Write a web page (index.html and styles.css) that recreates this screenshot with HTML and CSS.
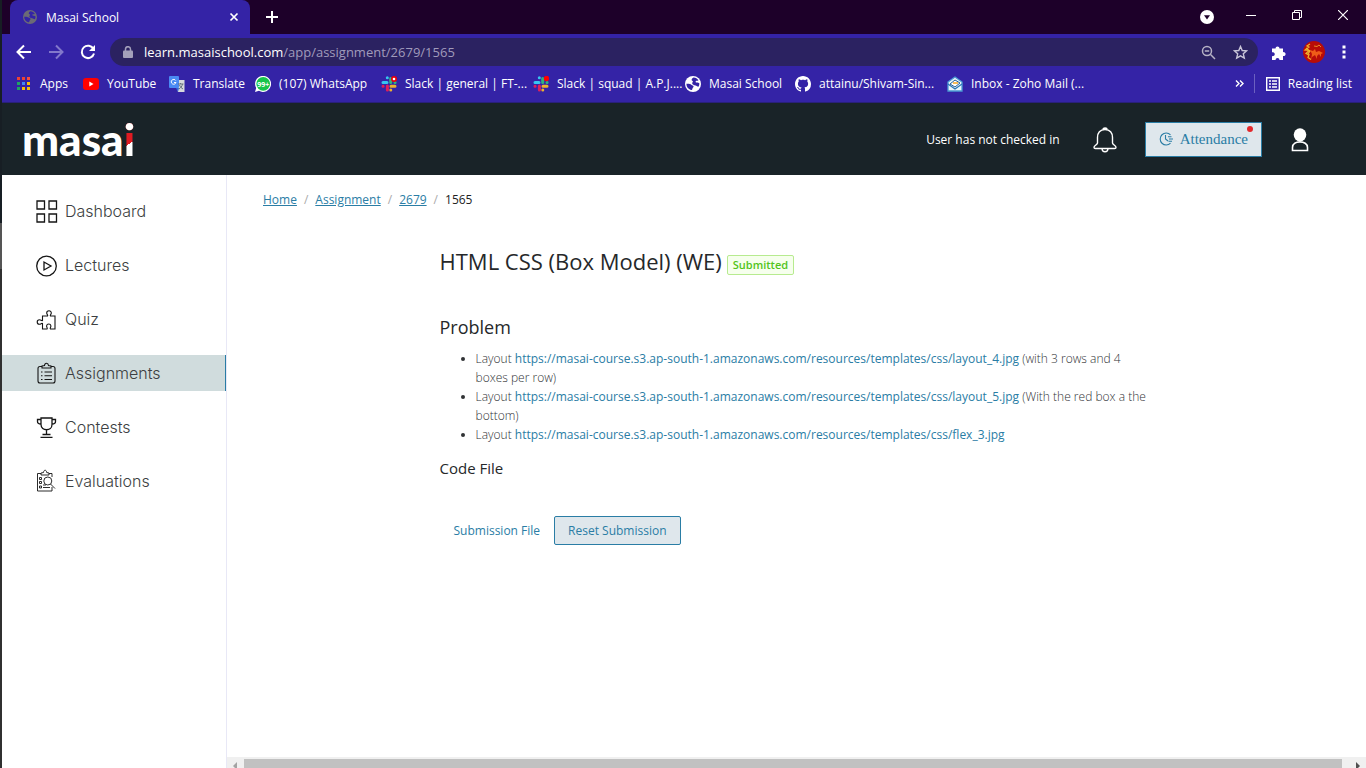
FILE: index.html
```html
<!DOCTYPE html>
<html lang="en">
<head>
<meta charset="utf-8">
<meta name="viewport" content="width=device-width, initial-scale=1">
<title>Masai School</title>
<link rel="stylesheet" href="styles.css">
</head>
<body>
<svg class="defs" aria-hidden="true">
  <symbol id="globe" viewBox="0 0 14 14"><circle cx="7" cy="7" r="7" fill="currentColor"/><path class="cut" d="M1.200 6.800c1.800-.2 3.500 0 4.300.8.700.7 1.900.3 2 1.400.1 1-.9 1.200-1 2.100-.1.700-.6 1.400-1.300 1.200C2.800 11.500 1.200 9.500 1.200 6.800zM7.500 1.300c1.800.1 3.400 1 4.300 2.500-.8.800-1.700.2-2.400.8-.5.600.2 1.100 1 1.100.9 0 1.700.2 2.200.9 0 1-.3 1.900-.8 2.700-1-.1-1.600-.7-2.600-1C8 7.900 6.500 7.800 6.300 6.600c-.1-.9.800-1.100.6-1.900-.1-.6-1-.5-1.100-1.200-.1-.9.800-1.900 1.700-2.200z"/></symbol>
  <symbol id="slack" viewBox="0 0 16 16"><g stroke-width="3" stroke-linecap="round" fill="none"><path d="M2 6.500h4M6.300 1.700v.1" stroke="#36c5f0"/><path d="M9.700 2.500v4M14 6.500h.1" stroke="#2eb67d"/><path d="M10 10.200h4M9.800 14v.1" stroke="#ecb22e"/><path d="M6.400 10v4M2 10.200h.1" stroke="#e01e5a"/></g></symbol>
</svg>
<div class="edge"></div>
<div class="window">
  <div class="tabs">
    <div class="tab"><svg class="i14 dim"><use href="#globe"/></svg><span>Masai School</span>
      <button class="ib" aria-label="Close tab"><svg width="10" height="10" viewBox="0 0 10 10"><path d="M1.500 1.500l7 7M8.500 1.500l-7 7" stroke="#fff" stroke-width="1.700"/></svg></button></div>
    <button class="ib new" aria-label="New tab"><svg width="12" height="12" viewBox="0 0 12 12"><path d="M6 0v12M0 6h12" stroke="#fff" stroke-width="2"/></svg></button>
    <div class="controls">
      <button class="ib search" aria-label="Search tabs"><svg width="14" height="14" viewBox="0 0 14 14"><circle cx="7" cy="7" r="7" fill="#fff"/><path d="M4 5.300h6L7 9.500z" fill="#1d0029"/></svg></button>
      <button class="ib" aria-label="Minimize"><svg width="10" height="10" viewBox="0 0 10 10"><path d="M0 5.500h10" stroke="#fff"/></svg></button>
      <button class="ib" aria-label="Restore"><svg width="10" height="10" viewBox="0 0 10 10"><path d="M.5 2.500h7v7h-7zM2.500 2.500v-2h7v7h-2" fill="none" stroke="#fff"/></svg></button>
      <button class="ib" aria-label="Close"><svg width="10" height="10" viewBox="0 0 10 10"><path d="M0 0l10 10M10 0L0 10" stroke="#fff" stroke-width="1.200"/></svg></button>
    </div>
  </div>
  <div class="toolbar">
    <div class="nav-buttons">
      <button class="ib" aria-label="Back"><svg width="16" height="16" viewBox="0 0 16 16"><path d="M15 8H2M8 1.500L1.500 8 8 14.500" fill="none" stroke="#fff" stroke-width="2"/></svg></button>
      <button class="ib" aria-label="Forward"><svg width="16" height="16" viewBox="0 0 16 16"><path d="M1 8h13M8 1.500L14.500 8 8 14.500" fill="none" stroke="#8278cb" stroke-width="2"/></svg></button>
      <button class="ib" aria-label="Reload"><svg width="16" height="16" viewBox="0 0 16 16"><path d="M13.500 5A6.200 6.200 0 1 0 14 9.500" fill="none" stroke="#fff" stroke-width="2"/><path d="M15 1v6H9z" fill="#fff"/></svg></button>
    </div>
    <div class="omnibox">
      <svg width="10" height="13" viewBox="0 0 10 13"><path d="M2.500 5V3.200a2.500 2.500 0 0 1 5 0V5" fill="none" stroke="#a4a0bb" stroke-width="1.500"/><rect y="4.500" width="10" height="7.500" rx="1" fill="#a4a0bb"/></svg>
      <span class="url"><b>learn.masaischool.com</b>/app/assignment/2679/1565</span>
      <button class="ib" aria-label="Zoom"><svg width="15" height="15" viewBox="0 0 15 15"><g fill="none" stroke="#b6b2c5" stroke-width="1.500"><circle cx="6" cy="6" r="4.500"/><path d="M9.300 9.300L14 14M3.800 6h4.400"/></g></svg></button>
      <button class="ib" aria-label="Bookmark"><svg width="15" height="15" viewBox="0 0 15 15"><path d="M7.500 1.500l1.700 4 4.400.4-3.300 2.900 1 4.300-3.800-2.300-3.800 2.300 1-4.300-3.300-2.900 4.400-.4z" fill="none" stroke="#c9c5d8" stroke-width="1.400"/></svg></button>
    </div>
    <div class="tools">
      <button class="ib" aria-label="Extensions"><svg width="15" height="15" viewBox="0 0 15 15"><path d="M1 3.500h3.500a2 2 0 1 1 4 0H12v3.700a2 2 0 1 1 0 3.800v4H8.500a2 2 0 1 0-4 0H1v-4a2 2 0 1 0 0-3.700z" fill="#fff"/></svg></button>
      <button class="ib" aria-label="Profile"><svg width="22" height="22" viewBox="0 0 22 22"><circle cx="11" cy="11" r="11" fill="#b80c08"/><path d="M7 3L4 5l2 1-4 3 4 .5-3 3 3 1-1 3 3 2M3 7l4 3-3 4" fill="none" stroke="#f1b52b" stroke-width="1.200"/><path d="M7 9l3 1 2-2 1 3 3-1 4 2-2 1v3l-2-3-2 2v3l-2-4-3 2-1 3 1-6z" fill="#ef5b18"/><path d="M11 5l3 .5L16 4l2 2" fill="none" stroke="#e88a22"/></svg></button>
      <button class="ib" aria-label="Menu"><svg width="4" height="14" viewBox="0 0 4 14"><path d="M.5.500h3v3h-3zM.5 5.500h3v3h-3zM.5 10.500h3v3h-3z" fill="#fff"/></svg></button>
    </div>
  </div>
  <nav class="bookmarks" aria-label="Bookmarks">
    <a href="#" class="w-s"><svg class="i16" viewBox="0 0 16 16"><path d="M1 1h3v3H1zM6 1h3v3H6z" fill="#ea4335"/><path d="M11 1h3v3h-3z" fill="#f44e3d"/><path d="M1 6h3v3H1z" fill="#1ea362"/><path d="M6 6h3v3H6z" fill="#4285f4"/><path d="M11 6h3v3h-3zM6 11h3v3H6zM11 11h3v3h-3z" fill="#fbbc05"/><path d="M1 11h3v3H1z" fill="#1ea362"/></svg>Apps</a>
    <a href="#" class="w-m"><svg class="i16" viewBox="0 0 16 16"><rect y="2" width="16" height="12" rx="3" fill="red"/><path d="M6.300 5.500v5l4.200-2.500z" fill="#fff"/></svg>YouTube</a>
    <a href="#" class="w-m"><svg class="i16" viewBox="0 0 16 16"><path d="M6 4h9.500v12H9z" fill="#d6d8dc"/><rect width="10" height="12" rx="1" fill="#4a8af4"/><path d="M6.700 4.500A2.400 2.400 0 1 0 7 6.500H5" fill="none" stroke="#fff"/><path d="M9 8h5.500M11.500 7v1M13.500 8c-.4 2.500-2 4-3.500 5M10.500 9c.8 2 2 3 3.500 4" fill="none" stroke="#66727d"/><path d="M7 12h3l-1 4z" fill="#3367d6"/></svg>Translate</a>
    <a href="#" class="w-l"><svg class="i16" viewBox="0 0 16 16"><path d="M0 16l1.200-4A8 8 0 1 1 4 14.800z" fill="#fff"/><circle cx="8.200" cy="7.800" r="6.900" fill="#16c44b"/><text x="8.200" y="10.600" text-anchor="middle" class="badge-text">99+</text></svg>(107) WhatsApp</a>
    <a href="#" class="w-xl"><svg class="i16" viewBox="0 0 16 16"><use href="#slack"/><circle cx="13" cy="3" r="3" fill="#e8000b"/><circle cx="13" cy="3" r="1.300" fill="#fff"/></svg>Slack | general | FT-...</a>
    <a href="#" class="w-xl"><svg class="i16" viewBox="0 0 16 16"><use href="#slack"/><circle cx="13.500" cy="2.500" r="2.700" fill="#f00"/></svg>Slack | squad | A.P.J....</a>
    <a href="#" class="w-n"><svg class="i16 globe"><use href="#globe"/></svg>Masai School</a>
    <a href="#" class="w-xl"><svg class="i16" viewBox="0 0 16 16"><path fill="#fff" d="M8 0C3.580 0 0 3.580 0 8c0 3.540 2.290 6.530 5.470 7.590.4.070.55-.17.55-.38 0-.19-.01-.82-.01-1.490-2.010.37-2.530-.49-2.690-.94-.09-.23-.48-.94-.82-1.130-.28-.15-.68-.52-.01-.53.63-.01 1.080.58 1.230.82.72 1.210 1.870.87 2.330.66.07-.52.28-.87.51-1.070-1.780-.2-3.640-.89-3.640-3.950 0-.87.31-1.590.82-2.150-.08-.2-.36-1.020.08-2.120 0 0 .67-.21 2.200.82.640-.18 1.320-.27 2-.27s1.360.09 2 .27c1.530-1.040 2.200-.82 2.200-.82.44 1.100.16 1.920.08 2.120.51.560.82 1.270.82 2.150 0 3.070-1.870 3.750-3.650 3.950.29.250.54.730.54 1.480 0 1.070-.01 1.930-.01 2.200 0 .21.150.46.550.38A8.010 8.010 0 0 0 16 8c0-4.420-3.580-8-8-8z"/></svg>attainu/Shivam-Sin...</a>
    <a href="#"><svg class="i16" viewBox="0 0 16 16"><path d="M1 6l7-5 7 5v9H1z" fill="#e8f4fb" stroke="#4a9ad4" stroke-width="1.300"/><path d="M3 8l5-4 5 3-5 4z" fill="#fff" stroke="#275f98"/><path d="M6 7h5" stroke="#f5a623" stroke-width="1.500"/><path d="M1 8l7 5 7-5" fill="none" stroke="#2a77b8" stroke-width="1.200"/></svg>Inbox - Zoho Mail (...</a>
    <div class="reading"><button class="ib" aria-label="More bookmarks"><svg width="9" height="7" viewBox="0 0 9 7"><path d="M1 .5l3 3-3 3M5 .5l3 3-3 3" fill="none" stroke="#fff" stroke-width="1.400"/></svg></button>
      <a href="#"><svg class="i14" viewBox="0 0 14 14"><path d="M.7.700h12.600v12.600H.7z" fill="none" stroke="#fff" stroke-width="1.400"/><path d="M3 4h2M6 4h5M3 7h2M6 7h5M3 10h2M6 10h5" stroke="#fff" stroke-width="1.500"/></svg>Reading list</a></div>
  </nav>
  <header class="site">
    <a href="#" class="logo" aria-label="masai">masa<span>i</span></a>
    <div class="user">
      <span class="status">User has not checked in</span>
      <button class="ib" aria-label="Notifications"><svg width="24" height="26" viewBox="0 0 24 26"><g fill="none" stroke="#fff" stroke-width="1.400"><path d="M12 2.500c-5 0-7.500 3.500-7.500 8v5.500c0 1.500-3.500 2.500-3.500 4.300 0 .8.500 1.200 1.300 1.200h19.400c.8 0 1.300-.4 1.300-1.200 0-1.800-3.500-2.800-3.500-4.300v-5.500c0-4.500-2.500-8-7.500-8zM10 2.700c0-2.300 4-2.300 4 0M9 21.700c.2 4 5.800 4 6 0"/></g></svg></button>
      <button class="attendance"><svg width="14" height="14" viewBox="0 0 14 14"><path d="M11.500 2.800A6 6 0 1 0 11.500 11.200M6.500 3v4l2.500 2M9 4.700h3.500M10 7h4M9.500 9.300H13" fill="none" stroke="#2a7da5" stroke-width="1.100"/></svg>Attendance<i></i></button>
      <button class="ib" aria-label="Account"><svg width="18" height="24" viewBox="0 0 18 24"><ellipse cx="9" cy="6.800" rx="6.300" ry="6.500" fill="#fff"/><path d="M1.500 22.500v-3c0-7.500 15-7.500 15 0v3z" fill="#192328" stroke="#fff" stroke-width="1.600"/></svg></button>
    </div>
  </header>
  <div class="body">
    <nav class="sidebar" aria-label="Main">
      <a href="#"><svg viewBox="0 0 22 24"><path d="M1 2h7.500v8H1zM13 2h7.500v8H13zM1 15h7.500v8H1zM13 15h7.500v8H13z"/></svg>Dashboard</a>
      <a href="#"><svg viewBox="0 0 22 24"><circle cx="10.500" cy="13" r="9.800"/><path d="M8 9v8l7-4z"/></svg>Lectures</a>
      <a href="#"><svg viewBox="0 0 22 24"><path d="M6.500 9h5c1-1-.8-1.500-.8-3a2.300 2.300 0 0 1 4.600 0c0 1.500-1.800 2-.8 3h4.500v13h-4.500c-1.200-1 .8-1.800.4-3.300a2.200 2.200 0 0 0-4.300 0c-.4 1.500 1.500 2.300.4 3.300H6.500v-5.500c-1-.8-1.500.8-3 .8a2.300 2.300 0 0 1 0-4.600c1.500 0 2 1.500 3 .8z" class="thin"/></svg>Quiz</a>
      <a href="#" class="active" aria-current="page"><svg viewBox="0 0 22 24"><path d="M6 5.500H4a2 2 0 0 0-2 2V20a2 2 0 0 0 2 2h13a2 2 0 0 0 2-2V7.500a2 2 0 0 0-2-2h-2M6 7V5l2.500-.5c.3-3 3.700-3 4 0L15 5v2zM5 11h1.500M8.500 11H16M5 14.700h1.500M8.500 14.700H16M5 18.500h1.500M8.500 18.500H16" class="thin"/></svg>Assignments</a>
      <a href="#"><svg viewBox="0 0 22 24"><path d="M5 3h11v6.500c0 7-11 7-11 0zM5 4.500H1.500v2C1.500 8.500 3 9 5 9M16 4.500h3.500v2c0 2-1.500 2.500-3.500 2.500M10.500 15v4.500M6.500 19.500h8M4.500 22.300h12"/></svg>Contests</a>
      <a href="#"><svg viewBox="0 0 22 24"><g class="fine"><path d="M5 4.500H1.500v17.500h14.500v-4M16 8V4.500h-3M5 6V4l2.500-.5c.2-3 3-3 3.200 0L13 4v2zM3.500 8.500h2v2h-2zM3.500 12.500h2v2h-2zM3.500 17h2v2h-2zM7 18.500h7M7 16h3M14.500 15l4.500 4.500"/><circle cx="11.800" cy="12" r="4"/></g></svg>Evaluations</a>
    </nav>
    <div class="content">
      <main>
        <nav class="crumbs" aria-label="Breadcrumb"><a href="#">Home</a><span>/</span><a href="#">Assignment</a><span>/</span><a href="#">2679</a><span>/</span><b>1565</b></nav>
        <article>
          <div class="title"><h1>HTML CSS (Box Model) (WE)</h1><span class="tag">Submitted</span></div>
          <h2>Problem</h2>
          <ul>
            <li>Layout <a href="#">https://masai-course.s3.ap-south-1.amazonaws.com/resources/templates/css/layout_4.jpg</a> (with 3 rows and 4 boxes per row)</li>
            <li>Layout <a href="#">https://masai-course.s3.ap-south-1.amazonaws.com/resources/templates/css/layout_5.jpg</a> (With the red box a the bottom)</li>
            <li>Layout <a href="#">https://masai-course.s3.ap-south-1.amazonaws.com/resources/templates/css/flex_3.jpg</a></li>
          </ul>
          <h3>Code File</h3>
          <div class="actions"><a href="#">Submission File</a><button>Reset Submission</button></div>
        </article>
      </main>
      <div class="scroll"><svg width="17" height="11" viewBox="0 0 17 11"><path d="M10 5v8L6 9z" fill="#a3a3a3"/></svg><div></div><svg width="24" height="11" viewBox="0 0 24 11"><path d="M14 5v8l4-4z" fill="#505050"/></svg></div>
    </div>
  </div>
</div>
</body>
</html>
```
FILE: styles.css
```css
* { box-sizing: border-box; }
body { margin: 0; display: flex; height: 100vh; overflow: hidden; background: #fff; color: #303235; font: 12px/19px "Open Sans", "Noto Sans", sans-serif; }
a { color: #2a7da5; text-decoration: none; }
svg { display: block; flex: none; }
button { font: inherit; cursor: pointer; }
.defs { position: absolute; width: 0; height: 0; }
.ib { display: flex; padding: 0; border: 0; background: none; }
.i14 { width: 14px; height: 14px; }
.i16 { width: 16px; height: 16px; }
.cut { fill: #3423a6; }
.dim { color: #6b6a76; }
.edge { width: 2px; flex: none; background: linear-gradient(#171e24 0 223px, #555 223px 269px, #303030 269px); }
.window { flex: 1; min-width: 0; display: flex; flex-direction: column; }

.tabs { display: flex; align-items: center; height: 34px; padding-left: 8px; background: #1d0029; color: #fff; }
.tab { display: flex; align-items: center; gap: 9px; width: 240px; height: 34px; padding: 0 11px 0 13px; border-radius: 8px 8px 0 0; background: #3423a6; }
.tab span { flex: 1; }
.new { margin-left: 16px; }
.controls { display: flex; align-items: center; gap: 36px; margin-left: auto; padding: 0 18px 4px 0; }
.search { margin: 4px -4px 0 0; }

.toolbar { display: flex; align-items: center; height: 36px; background: #3423a6; }
.nav-buttons { display: flex; gap: 16px; padding: 0 14px; }
.omnibox { flex: 1; display: flex; align-items: center; gap: 17px; height: 28px; padding: 0 10px 0 13px; border-radius: 14px; background: #2b2261; }
.url { flex: 1; margin-left: -6px; color: #a09bbb; font-size: 13px; }
.url b { color: #fff; font-weight: 400; }
.tools { display: flex; align-items: center; gap: 17px; padding: 0 20px 0 13px; }

.bookmarks { display: flex; align-items: center; height: 33px; padding: 0 14px 5px; border-bottom: 1px solid #29207a; background: #3423a6; white-space: nowrap; }
.bookmarks a { display: flex; align-items: center; gap: 8px; color: #fff; }
.bookmarks .w-s { width: 67px; }
.bookmarks .w-m { width: 86px; }
.bookmarks .w-n { width: 110px; }
.bookmarks .w-l { width: 126px; }
.bookmarks .w-xl { width: 152px; }
.globe { color: #fff; }
.badge-text { fill: #fff; font: 700 7px "Open Sans", sans-serif; }
.reading { display: flex; align-items: center; gap: 10px; margin-left: auto; }
.reading a { padding-left: 11px; border-left: 1px solid #6c60c0; }

.site { display: flex; align-items: center; justify-content: space-between; height: 72px; flex: none; padding: 0 57px 0 20px; background: #192328; color: #fff; }
.logo { color: #fff; font: 900 44px/60px Lato, sans-serif; }
.logo span { background: linear-gradient(#fff 0 20px, transparent 20px), linear-gradient(145deg, #e01b22 0 58%, #fff 58%); background-clip: text; -webkit-background-clip: text; color: transparent; }
.user { display: flex; align-items: center; }
.user > .ib { margin: 2px 0 0 33px; }
.attendance { position: relative; display: flex; align-items: center; gap: 7px; height: 35px; margin-left: 28px; padding: 0 13px; border: 1px solid #2a7da5; background: #dfe7ec; color: #2a7da5; font: 15px "Liberation Serif", serif; }
.attendance i { position: absolute; top: 3px; right: 8px; width: 6px; height: 6px; border-radius: 50%; background: #e3282b; }
.user > .attendance + .ib { margin-left: 29px; }

.body { flex: 1; min-height: 0; display: flex; }
.sidebar { display: flex; flex-direction: column; gap: 18px; width: 225px; flex: none; padding-top: 18px; border-right: 1px solid #e8e8f6; }
.sidebar a { display: flex; align-items: center; gap: 7px; height: 36px; padding-left: 34px; color: #3d3f42; font: 300 16px/24px Inter, sans-serif; }
.sidebar .active { border-right: 1px solid #2a7da5; background: #d0dcdd; }
.sidebar svg { width: 22px; height: 24px; fill: none; stroke: #151515; stroke-width: 1.300; }
.sidebar .thin { stroke-width: 1.100; }
.sidebar .fine { stroke-width: 0.900; }

.content { flex: 1; min-width: 0; display: flex; flex-direction: column; }
main { flex: 1; padding: 15px 36px; }
.crumbs { display: flex; gap: 7px; }
.crumbs a { text-decoration: underline; text-underline-offset: 1px; }
.crumbs span { color: #aaa; }
.crumbs b { font-weight: 400; color: #222; }
article { max-width: 714px; margin: 36px auto 0; }
h1, h2, h3 { margin: 0; font-weight: 400; color: #26282a; }
.title { display: flex; align-items: center; gap: 5px; }
h1 { font-size: 22px; line-height: 32px; }
.tag { height: 20px; margin-top: 7px; padding: 0 5px; border: 1px solid #b7eb8f; border-radius: 2px; background: #f6ffed; color: #52c41a; font-size: 11px; font-weight: 600; line-height: 18px; }
h2 { margin-top: 37px; font-size: 18px; line-height: 26px; }
ul { margin: 9px 0 0; padding-left: 36px; font-weight: 300; }
ul a { font-weight: 400; }
h3 { margin-top: 13px; font-size: 15px; line-height: 22px; }
.actions { display: flex; align-items: center; gap: 14px; margin-top: 37px; padding-left: 14px; }
.actions button { height: 29px; padding: 0 13px; border: 1px solid #2a7da5; border-radius: 2px; background: #dfe7ec; color: #2a7da5; }
.scroll { display: flex; height: 11px; background: #f0f0f0; }
.scroll div { flex: 1; margin-top: 2px; background: #c1c1c1; }
```
